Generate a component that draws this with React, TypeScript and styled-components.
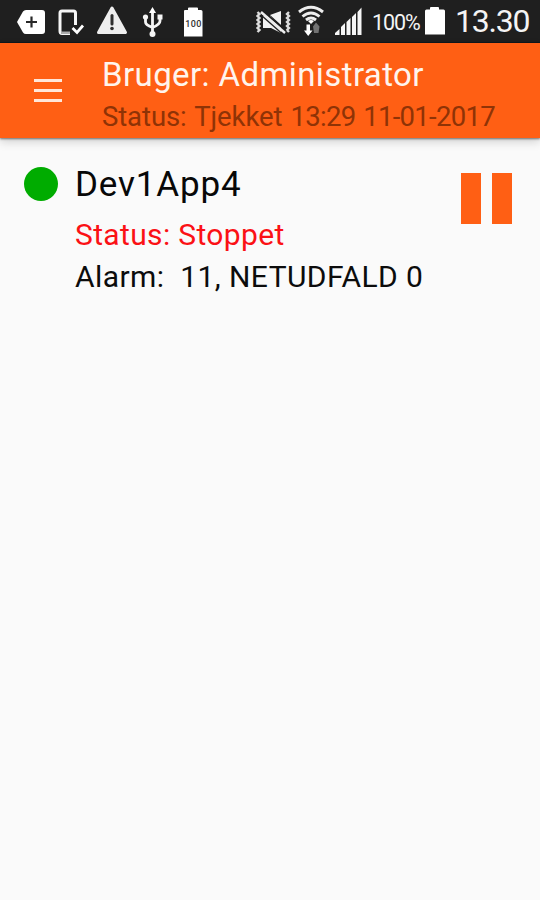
import React from 'react';
import styled, { createGlobalStyle } from 'styled-components';

const GlobalStyle = createGlobalStyle`
  * { box-sizing: border-box; }
  body { margin: 0; background: #fafafa; font-family: Roboto, "Noto Sans", sans-serif; }
`;

const Screen = styled.div`
  width: 540px;
  height: 900px;
  display: flex;
  flex-direction: column;
  background: #fafafa;
  overflow: hidden;
`;

const StatusBar = styled.div`
  flex: none;
  height: 43px;
  display: flex;
  align-items: flex-start;
  background: #1f1f1f;
  border-bottom: 1px solid #10181d;
`;

const StatusIcon = styled.svg<{ $gap?: number }>`
  flex: none;
  display: block;
  height: 42px;
  margin-left: ${(p) => p.$gap ?? 0}px;
`;

const StatusLabel = styled.span<{ $size: number; $gap: number; $top: number; $width: number; $spacing?: number }>`
  flex: none;
  width: ${(p) => p.$width}px;
  margin-left: ${(p) => p.$gap}px;
  margin-top: ${(p) => p.$top}px;
  font-size: ${(p) => p.$size}px;
  line-height: 1;
  letter-spacing: ${(p) => p.$spacing ?? 0}px;
  color: #f4f4f4;
  white-space: pre;
`;

const BatteryText = styled.text`
  font: 500 9px Roboto, sans-serif;
`;

const AppBar = styled.header`
  flex: none;
  height: 95px;
  display: flex;
  background: #ff5f14;
  box-shadow: 0 1px 2px rgba(0, 0, 0, 0.5), 0 4px 9px rgba(0, 0, 0, 0.16);
`;

const MenuButton = styled.button`
  width: 102px;
  height: 95px;
  padding: 36px 0 0 34px;
  border: 0;
  background: none;
  display: flex;
  flex-direction: column;
  gap: 7px;
`;

const MenuLine = styled.span`
  width: 28px;
  height: 3px;
  background: #ffe6d9;
`;

const Column = styled.div<{ $top: number }>`
  flex: 1;
  display: flex;
  flex-direction: column;
  align-items: flex-start;
  padding-top: ${(p) => p.$top}px;
`;

const Line = styled.span<{ $size: number; $height: number; $color: string; $spacing?: number; $words?: number }>`
  font-size: ${(p) => p.$size}px;
  line-height: ${(p) => p.$height}px;
  letter-spacing: ${(p) => p.$spacing ?? 0}px;
  word-spacing: ${(p) => p.$words ?? 0}px;
  color: ${(p) => p.$color};
  white-space: pre;
`;

const Timestamp = styled.time`
  letter-spacing: -0.7px;
`;

const DeviceRow = styled.section`
  display: flex;
  padding: 28px 28px 0 24px;
`;

const StateDot = styled.span`
  width: 34px;
  height: 34px;
  margin: 1px 17px 0 0;
  border-radius: 50%;
  background: #00ac00;
`;

const PauseButton = styled.button`
  display: flex;
  gap: 11px;
  height: 51px;
  margin-top: 7px;
  padding: 0;
  border: 0;
  background: none;
`;

const PauseBar = styled.span`
  width: 20px;
  height: 51px;
  background: #ff5f14;
`;

export default function App() {
  return (
    <Screen>
      <GlobalStyle />
      <StatusBar>
        <StatusIcon $gap={16} width="30" viewBox="16 0 30 42">
          <path d="M17 22 23 11.5Q24 10 26 10H42Q45 10 45 13V31Q45 34 42 34H26Q24 34 23 32.5Z" fill="#fff" />
          <path d="M31.5 16.5v11M26 22h11" stroke="#282828" strokeWidth="2.2" />
        </StatusIcon>
        <StatusIcon $gap={11} width="28" viewBox="57 0 28 42">
          <path d="M75.5 25V13Q75.5 11 73.5 11H62Q60 11 60 13V31Q60 33.500 62 33.500H70" fill="none" stroke="#f5f5f5" strokeWidth="3" />
          <path d="M61 31.500H70V34H61Z" fill="#aaa" />
          <path d="m72.500 28 4.500 4.500 6-7" fill="none" stroke="#fff" strokeWidth="2.700" />
        </StatusIcon>
        <StatusIcon $gap={11} width="32" viewBox="96 0 32 42">
          <path d="M112 8 125.500 32.500H98.500Z" fill="#eee" stroke="#eee" strokeWidth="3" strokeLinejoin="round" />
          <path d="M112 15.500V24" stroke="#303030" strokeWidth="3" strokeLinecap="round" />
          <circle cx="112" cy="28.500" r="1.800" fill="#303030" />
        </StatusIcon>
        <StatusIcon $gap={14} width="22" viewBox="142 0 22 42">
          <path d="M152.500 11V34M145.500 18V22Q145.500 25 152.500 27.500M160 17V21Q160 24.500 152.500 27.500" fill="none" stroke="#f5f5f5" strokeWidth="2.800" />
          <path d="m152.500 7 3.500 6h-7Z" fill="#fff" />
          <circle cx="145.500" cy="17" r="2.600" fill="#f5f5f5" />
          <path d="M157.500 14.500h5v5h-5Z" fill="#f5f5f5" />
          <circle cx="152.500" cy="34" r="3" fill="#f5f5f5" />
        </StatusIcon>
        <StatusIcon $gap={20} width="20" viewBox="184 0 20 42">
          <path d="M184 11Q184 10 185 10H188V8.500Q188 7.500 189 7.500H197Q198 7.500 198 8.500V10H201Q202.500 10 202.500 11.500V36.500H184Z" fill="#fff" />
          <BatteryText x="193.300" y="27" textAnchor="middle" fill="#333" textLength="16">100</BatteryText>
        </StatusIcon>
        <StatusIcon $gap={50} width="40" viewBox="254 0 40 42">
          <path d="M257.500 12l2 2-2 2 2 2-2 2 2 2-2 2 2 2-2 2 2 2-2 2M289 12l-2 2 2 2-2 2 2 2-2 2 2 2-2 2 2 2-2 2 2 2" fill="none" stroke="#ddd" strokeWidth="2.400" />
          <path d="M263 16H270L281 27V33L271 28H263Z" fill="#f2f2f2" />
          <path d="M270 15 281 11V25Z" fill="#f2f2f2" />
          <path d="M262 10.500 286 31" stroke="#1f1f1f" strokeWidth="2" />
          <path d="M261 12 285 33" stroke="#eee" strokeWidth="2.500" />
          <path d="M261 15 283 34.500" stroke="#1f1f1f" strokeWidth="1.300" />
        </StatusIcon>
        <StatusIcon $gap={4} width="28" viewBox="298 0 28 42">
          <path d="M299 12Q311 2.500 323 12M302.500 16.500Q311 9.500 319.500 16.500M306 20Q311 16 316 20" fill="none" stroke="#ededed" strokeWidth="2.900" />
          <path d="m311 24-3-3q3-2 6 0Z" fill="#fff" />
          <path d="M306.500 24.500h3.500v6h2.500L308.200 36 304 30.500h2.500Z" fill="#fff" />
          <path d="m316 22.500 3.500 4-1 6.500h-4.500l-1-6.500Z" fill="#727272" />
        </StatusIcon>
        <StatusIcon $gap={8} width="30" viewBox="334 0 30 42">
          <path d="M335 35v-2l4.500-4v6ZM341 35v-8l4-4v12ZM346.500 35v-13l4-4v17ZM352 35v-18l4-4v22ZM357.500 35V12l4-4.500v27.500Z" fill="#f6f6f6" />
        </StatusIcon>
        <StatusLabel $size={21.5} $gap={8} $top={12} $width={47} $spacing={-1.1}>100%</StatusLabel>
        <StatusIcon $gap={5} width="22" viewBox="424 0 22 42">
          <path d="M425 11Q425 9.500 426.500 9.500H430V8Q430 7 431 7H438Q439 7 439 8V9.500H443.500Q445 9.500 445 11V34.500H425Z" fill="#fff" />
        </StatusIcon>
        <StatusLabel $size={32} $gap={9} $top={5} $width={80} $spacing={-1.2}>13.30</StatusLabel>
      </StatusBar>

      <AppBar>
        <MenuButton aria-label="Menu">
          <MenuLine />
          <MenuLine />
          <MenuLine />
        </MenuButton>
        <Column $top={12}>
          <Line $size={33} $height={40} $color="#fff4ed" $spacing={0.4}>Bruger: Administrator</Line>
          <Line $size={27.5} $height={43} $color="#8f3306" $spacing={-0.1} $words={1.5}>
            Status: Tjekket <Timestamp>13:29 11-01-2017</Timestamp>
          </Line>
        </Column>
      </AppBar>

      <DeviceRow>
        <StateDot />
        <Column $top={1}>
          <Line $size={35} $height={36} $color="#080808" $spacing={0.85}>Dev1App4</Line>
          <Line $size={30} $height={64} $color="#fb1115" $spacing={0.35}>Status: Stoppet</Line>
          <Line $size={30} $height={19} $color="#0c0c0c" $spacing={0.43}>Alarm:  11, NETUDFALD 0</Line>
        </Column>
        <PauseButton aria-label="Pause">
          <PauseBar />
          <PauseBar />
        </PauseButton>
      </DeviceRow>
    </Screen>
  );
}
